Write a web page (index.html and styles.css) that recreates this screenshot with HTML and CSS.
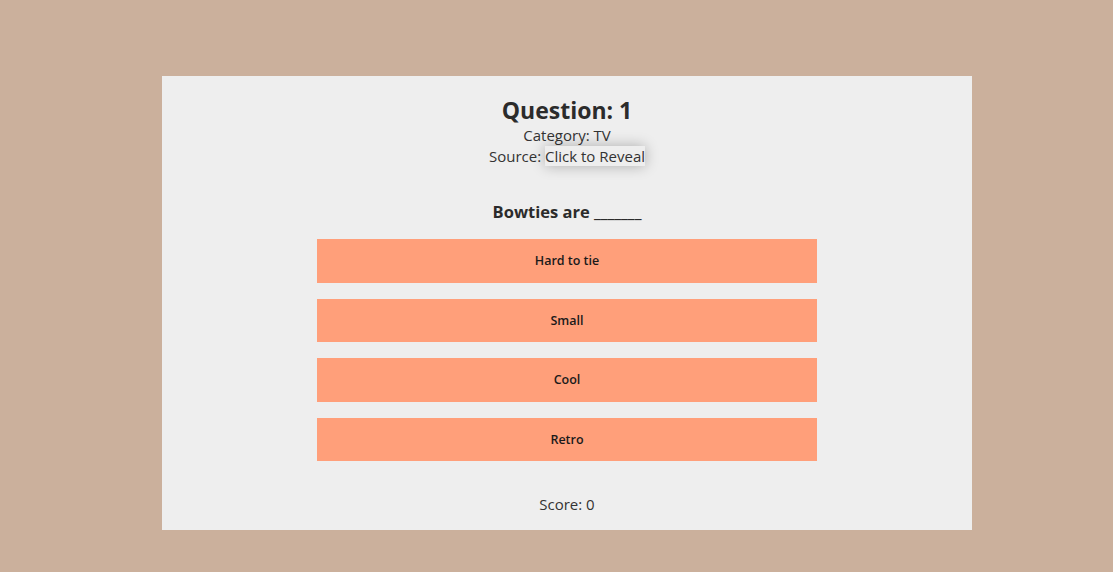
FILE: index.html
```html
<!DOCTYPE html>
<html>
<head>
<meta charset="utf-8">
<link rel="stylesheet" href="styles.css">
</head>
<body>
<div class="card">
  <h1 class="title">Question: 1</h1>
  <div class="meta">Category: TV</div>
  <div class="meta">Source: <span class="reveal">Click to Reveal</span></div>
  <h2 class="question">Bowties are _______</h2>
  <div class="answers">
    <button class="answer">Hard to tie</button>
    <button class="answer">Small</button>
    <button class="answer">Cool</button>
    <button class="answer">Retro</button>
  </div>
  <div class="score">Score: 0</div>
</div>
</body>
</html>
```
FILE: styles.css
```css
html, body {
  margin: 0;
  padding: 0;
}
body {
  background: #cbb09c;
  font-family: "Open Sans", "Noto Sans", sans-serif;
  color: #333;
  padding-top: 76px;
}
.card {
  width: 810px;
  height: 454px;
  margin-left: 162px;
  background: #eeeeee;
  box-sizing: border-box;
  display: flex;
  flex-direction: column;
  align-items: center;
  padding-top: 19px;
}
.title {
  margin: 0;
  font-size: 23px;
  line-height: 30px;
  font-weight: 700;
  color: #2b2b2b;
}
.meta {
  font-size: 15px;
  line-height: 21px;
  color: #333;
}
.reveal {
  box-shadow: 0 0 14px 0 rgba(0,0,0,0.28);
  color: #333;
}
.question {
  margin: 33px 0 0 0;
  font-size: 16.5px;
  line-height: 24px;
  font-weight: 700;
  color: #2b2b2b;
}
.answers {
  margin-top: 15px;
  display: flex;
  flex-direction: column;
  gap: 16px;
  width: 500px;
}
.answer {
  height: 43.5px;
  border: none;
  background: #ff9f7a;
  font-family: "Open Sans", "Noto Sans", sans-serif;
  font-size: 12.5px;
  font-weight: 600;
  color: #1a1a1a;
  padding: 0;
}
.score {
  margin-top: 33px;
  font-size: 15px;
  line-height: 20px;
  color: #333;
}
```
